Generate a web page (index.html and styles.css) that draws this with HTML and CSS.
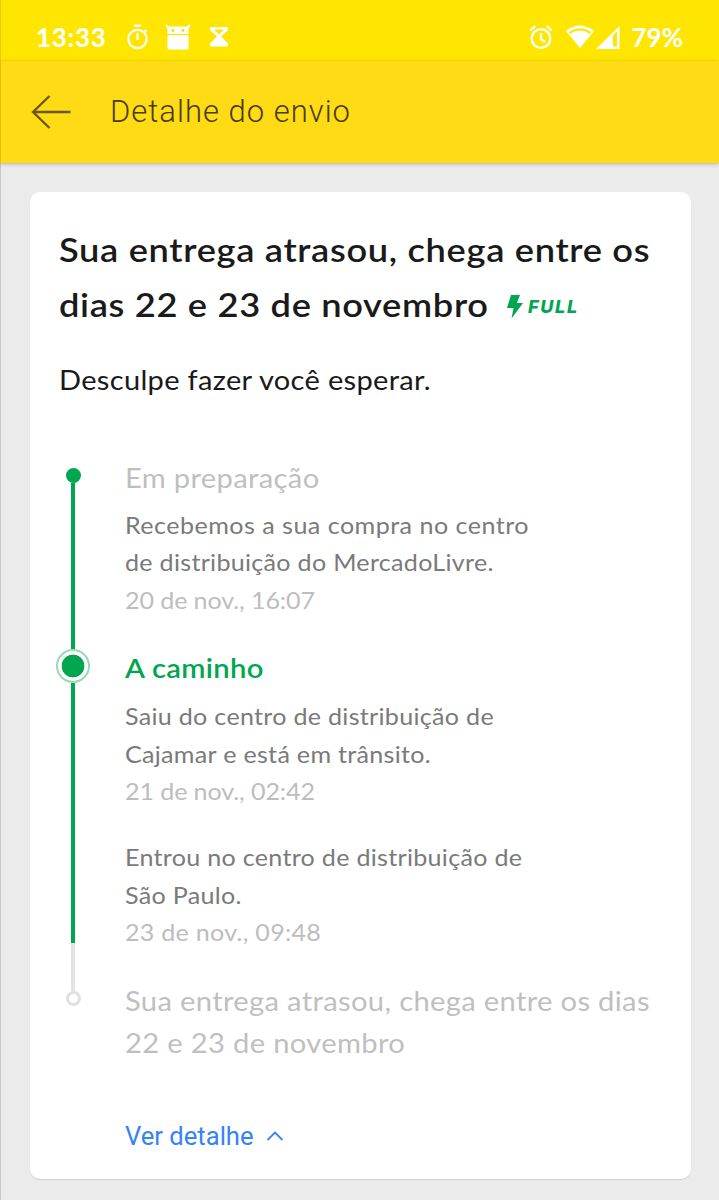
FILE: index.html
```html
<!DOCTYPE html>
<html lang="pt-BR">
<head>
<meta charset="utf-8">
<title>Detalhe do envio</title>
<link rel="stylesheet" href="styles.css">
</head>
<body>
<div class="statusbar">
  <span class="clock">13:33</span>
  <svg class="s-timer" width="24" height="26" viewBox="0 0 24 26" fill="none" stroke="#fff" stroke-width="2.2"><circle cx="11.5" cy="15" r="9.2"/><path d="M8 1.6h7M11.5 9v7M18.5 6l2 2"/></svg>
  <svg class="s-droid" width="26" height="26" viewBox="0 0 26 26"><path fill="#fff" d="M1 0l3 2.500h18l3-2.500 .6 1L23.500 5v5h-21V5L.4 1zM2.500 11.200h21v12.800q0 1.500-1.500 1.500H4Q2.500 25.500 2.500 24z"/><circle cx="8" cy="6.500" r="1.400" fill="#ffd800"/><circle cx="18" cy="6.500" r="1.400" fill="#ffd800"/></svg>
  <svg class="s-glass" width="20" height="20" viewBox="0 0 20 20" fill="#fff"><path fill-rule="evenodd" d="M1 0h18v3l-7 6.500 7 7v3H1v-3l7-7L1 3zM5 2.500l5 5 5-5z"/></svg>
  <svg class="s-alarm" width="24" height="24" viewBox="0 0 24 24" fill="none" stroke="#fff" stroke-width="2.300"><circle cx="12" cy="13.500" r="9.300"/><path d="M1.200 5.500l5-4.300M22.800 5.500l-5-4.300M12 8v6l4 3"/></svg>
  <svg class="s-wifi" width="28" height="24" viewBox="0 0 28 24"><path fill="#fff" d="M0 6Q14-5 28 6L14 23z"/><path d="M3.500 8Q14 .6 24.500 8" fill="none" stroke="#ffe600" stroke-width="2.200"/></svg>
  <svg class="s-signal" width="24" height="23" viewBox="0 0 24 23"><path fill="#fff" fill-rule="evenodd" d="M23.500 0v23H0zM17 9.500V20.500h4V5.500z"/></svg>
  <span class="battery">79%</span>
</div>
<header class="appbar">
  <svg width="40" height="36" viewBox="0 0 40 36" fill="none" stroke="#6b5600" stroke-width="2.300"><path d="M39.500 18H2M18.500 2L2 18l16.500 16"/></svg>
  <h1>Detalhe do envio</h1>
</header>
<main class="card">
  <h2><span class="headline">Sua entrega atrasou, chega entre os<br>dias 22 e 23 de novembro</span></h2>
  <span class="full"><svg width="18" height="24" viewBox="0 0 18 24"><path fill="#00a650" d="M5 0h9l-3.200 8H17L5.500 23.500 7.500 13H1z"/></svg><em>FULL</em></span>
  <p class="sorry">Desculpe fazer você esperar.</p>
  <div class="timeline">
    <div class="rail">
      <i class="dot"></i><i class="line first"></i><i class="ring"></i><i class="line second"></i><i class="line pending"></i><i class="dot hollow"></i>
    </div>
    <div class="steps">
      <section class="step">
        <h3>Em preparação</h3>
        <p class="received"><span class="wide">Recebemos a sua compra no centro</span><br>de distribuição do MercadoLivre.<br><time>20 de nov., 16:07</time></p>
      </section>
      <section class="step">
        <h3 class="active">A caminho</h3>
        <p>Saiu do centro de distribuição de<br>Cajamar e está em trânsito.<br><time>21 de nov., 02:42</time></p>
        <p class="next">Entrou no centro de distribuição de<br>São Paulo.<br><time class="wider">23 de nov., 09:48</time></p>
      </section>
      <section class="step final">
        <h3>Sua entrega atrasou, chega entre os dias<br>22 e 23 de novembro</h3>
      </section>
      <a class="more">Ver detalhe<svg width="18" height="12" viewBox="0 0 18 12" fill="none" stroke="#3483fa" stroke-width="1.800"><path d="M1.500 10L9 2.500l7.500 7.500"/></svg></a>
    </div>
  </div>
</main>
</body>
</html>
```
FILE: styles.css
```css
* { box-sizing: border-box; }
body {
  margin: 0;
  height: 1200px;
  overflow: hidden;
  background: #ebebeb;
  font-family: Lato, "Open Sans", sans-serif;
  box-shadow: inset 1px 0 #c8c8c8;
}
h1, h2, h3, p { margin: 0; font-weight: 400; white-space: nowrap; }
svg { display: block; flex: none; }

.statusbar {
  display: flex;
  align-items: center;
  height: 61px;
  padding: 13px 36px 0 35px;
  background: #ffe600;
  border-left: 1px solid #e6cc00;
  color: #fff;
  font-size: 26px;
  font-weight: 700;
}
.clock { width: 90px; letter-spacing: 0.7px; }
.s-timer { margin-right: 15px; }
.s-droid { margin-right: 18px; }
.s-alarm { margin-left: auto; margin-right: 13px; }
.s-wifi { margin-right: 2px; }
.s-signal { margin-right: 12px; }

.appbar {
  display: flex;
  align-items: center;
  gap: 39px;
  height: 102px;
  padding-left: 30px;
  background: #ffdb15;
  box-shadow: 0 1px 4px rgba(0, 0, 0, 0.25);
  border-left: 1px solid #e6c000;
}
.appbar h1 {
  margin-top: -2px;
  color: #4a3b05;
  font-family: Roboto, sans-serif;
  font-size: 31px;
  font-weight: 300;
  letter-spacing: 1px;
}

.card {
  display: flex;
  flex-direction: column;
  width: 661px;
  height: 987px;
  margin: 29px 0 0 30px;
  padding: 29.500px 29px 0;
  background: #fff;
  border-radius: 10px;
  box-shadow: 0 1px 1px rgba(0, 0, 0, 0.12);
}
h2 {
  color: #1a1a1a;
  font-size: 32.500px;
  line-height: 55px;
  font-weight: 600;
  letter-spacing: 0.600px;
}
/* Widened letterforms */
.headline { display: inline-block; transform: scaleX(1.115); transform-origin: 0 0; }
.full {
  display: flex;
  align-items: center;
  gap: 4px;
  height: 24px;
  margin: -37px 0 13px 447px;
  color: #00a650;
  font-family: Inter, sans-serif;
  font-size: 18px;
  line-height: 24px;
  font-weight: 800;
  letter-spacing: 1.700px;
}
.sorry {
  margin-top: 28px;
  color: #1a1a1a;
  font-size: 27px;
  line-height: 40px;
  letter-spacing: 0.300px;
  transform: scaleX(1.075);
  transform-origin: 0 0;
}

.timeline { display: flex; margin-top: 57px; }
.rail {
  display: flex;
  flex-direction: column;
  align-items: center;
  width: 34px;
  margin: 11px 35px 0 -3px;
}
.dot { width: 15px; height: 15px; border-radius: 50%; background: #00a650; }
.dot.hollow { border: 3px solid #e0e0e0; background: #fff; }
.line { width: 4px; background: #00a650; }
.first { height: 166px; }
.second { height: 260px; }
.pending { height: 48px; background: #e3e3e3; }
.ring {
  width: 34px;
  height: 34px;
  border: 2px solid #99d9b6;
  border-radius: 50%;
  background: radial-gradient(circle, #00a650 11px, #fff 11.700px);
}
.step { margin-bottom: 28px; }
h3 {
  color: #bfbfbf;
  font-size: 27px;
  line-height: 42px;
  letter-spacing: 0.300px;
  transform: scaleX(1.08);
  transform-origin: 0 0;
}
h3.active { color: #00a650; font-weight: 600; }
.step p {
  margin-top: 8px;
  color: #7a7a7a;
  font-size: 24px;
  line-height: 37.500px;
  letter-spacing: 0.280px;
  transform: scaleX(1.045);
  transform-origin: 0 0;
}
.step .received { margin: 7px 0 29px; }
.step .next { margin-top: 28.500px; }
.final { padding-top: 1px; }
.wide { letter-spacing: 0.450px; }
time { color: #bdbdbd; letter-spacing: -0.100px; }
.wider { letter-spacing: 0.250px; }
.more {
  display: flex;
  align-items: center;
  gap: 12px;
  margin-top: 56px;
  color: #3483fa;
  font: 400 25.600px/32px Roboto, sans-serif;
}
```
